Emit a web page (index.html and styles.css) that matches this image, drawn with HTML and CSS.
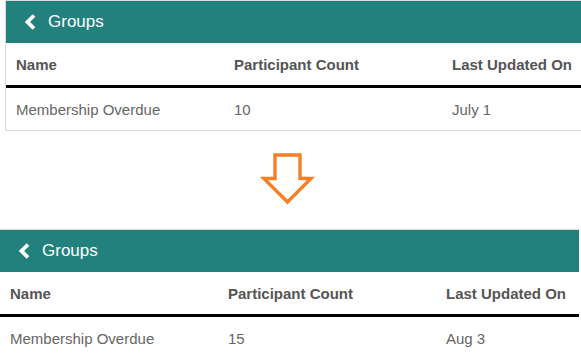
FILE: index.html
```html
<!DOCTYPE html>
<html lang="en">
<head>
  <meta charset="UTF-8">
  <title>Groups</title>
  <link rel="stylesheet" href="styles.css">
</head>
<body>
  <div class="panel panel-before">
    <header class="bar">
      <svg class="back" width="11" height="16" viewBox="0 0 11 16"><polyline points="9,1.5 2.5,8 9,14.5" fill="none" stroke="#fff" stroke-width="3.8" stroke-linejoin="miter"/></svg>
      <span>Groups</span>
    </header>
    <div class="row head">
      <div>Name</div>
      <div>Participant Count</div>
      <div>Last Updated On</div>
    </div>
    <div class="row data">
      <div>Membership Overdue</div>
      <div>10</div>
      <div>July 1</div>
    </div>
  </div>

  <div class="arrow">
    <svg width="56" height="56" viewBox="0 0 56 56"><polygon points="15,4 40,4 40,27.5 51,27.5 27.5,51 4,27.5 15,27.5" fill="#fff" stroke="#f58025" stroke-width="3.4" stroke-linejoin="miter"/></svg>
  </div>

  <div class="panel panel-after">
    <header class="bar">
      <svg class="back" width="11" height="16" viewBox="0 0 11 16"><polyline points="9,1.5 2.5,8 9,14.5" fill="none" stroke="#fff" stroke-width="3.8" stroke-linejoin="miter"/></svg>
      <span>Groups</span>
    </header>
    <div class="row head">
      <div>Name</div>
      <div>Participant Count</div>
      <div>Last Updated On</div>
    </div>
    <div class="row data">
      <div>Membership Overdue</div>
      <div>15</div>
      <div>Aug 3</div>
    </div>
  </div>
</body>
</html>
```

FILE: styles.css
```css
body {
  margin: 0;
  font-family: "Liberation Sans", Arial, sans-serif;
  background: #fff;
  overflow: hidden;
  width: 581px;
}
.panel {
  border-top: 1px solid #dadada;
  background: #fff;
}
.panel-before {
  margin-left: 5px;
  border-left: 1px solid #dadada;
  border-bottom: 1px solid #dadada;
  width: 600px;
}
.panel-after {
  width: 579px;
}
.bar {
  background-color: #22807d;
  color: #fff;
  height: 42px;
  display: flex;
  align-items: center;
  padding-left: 19px;
  font-size: 17px;
}
.back {
  margin-right: 12px;
}
.row {
  display: grid;
  grid-template-columns: 218px 218px 1fr;
  padding-left: 10px;
  height: 42px;
  align-items: center;
  font-size: 15px;
}
.head {
  font-weight: bold;
  color: #555;
  border-bottom: 3px solid #000;
}
.data {
  color: #666;
}
.arrow {
  height: 98px;
  padding-left: 260px;
  padding-top: 20px;
  box-sizing: border-box;
}
.arrow svg {
  display: block;
}
```
